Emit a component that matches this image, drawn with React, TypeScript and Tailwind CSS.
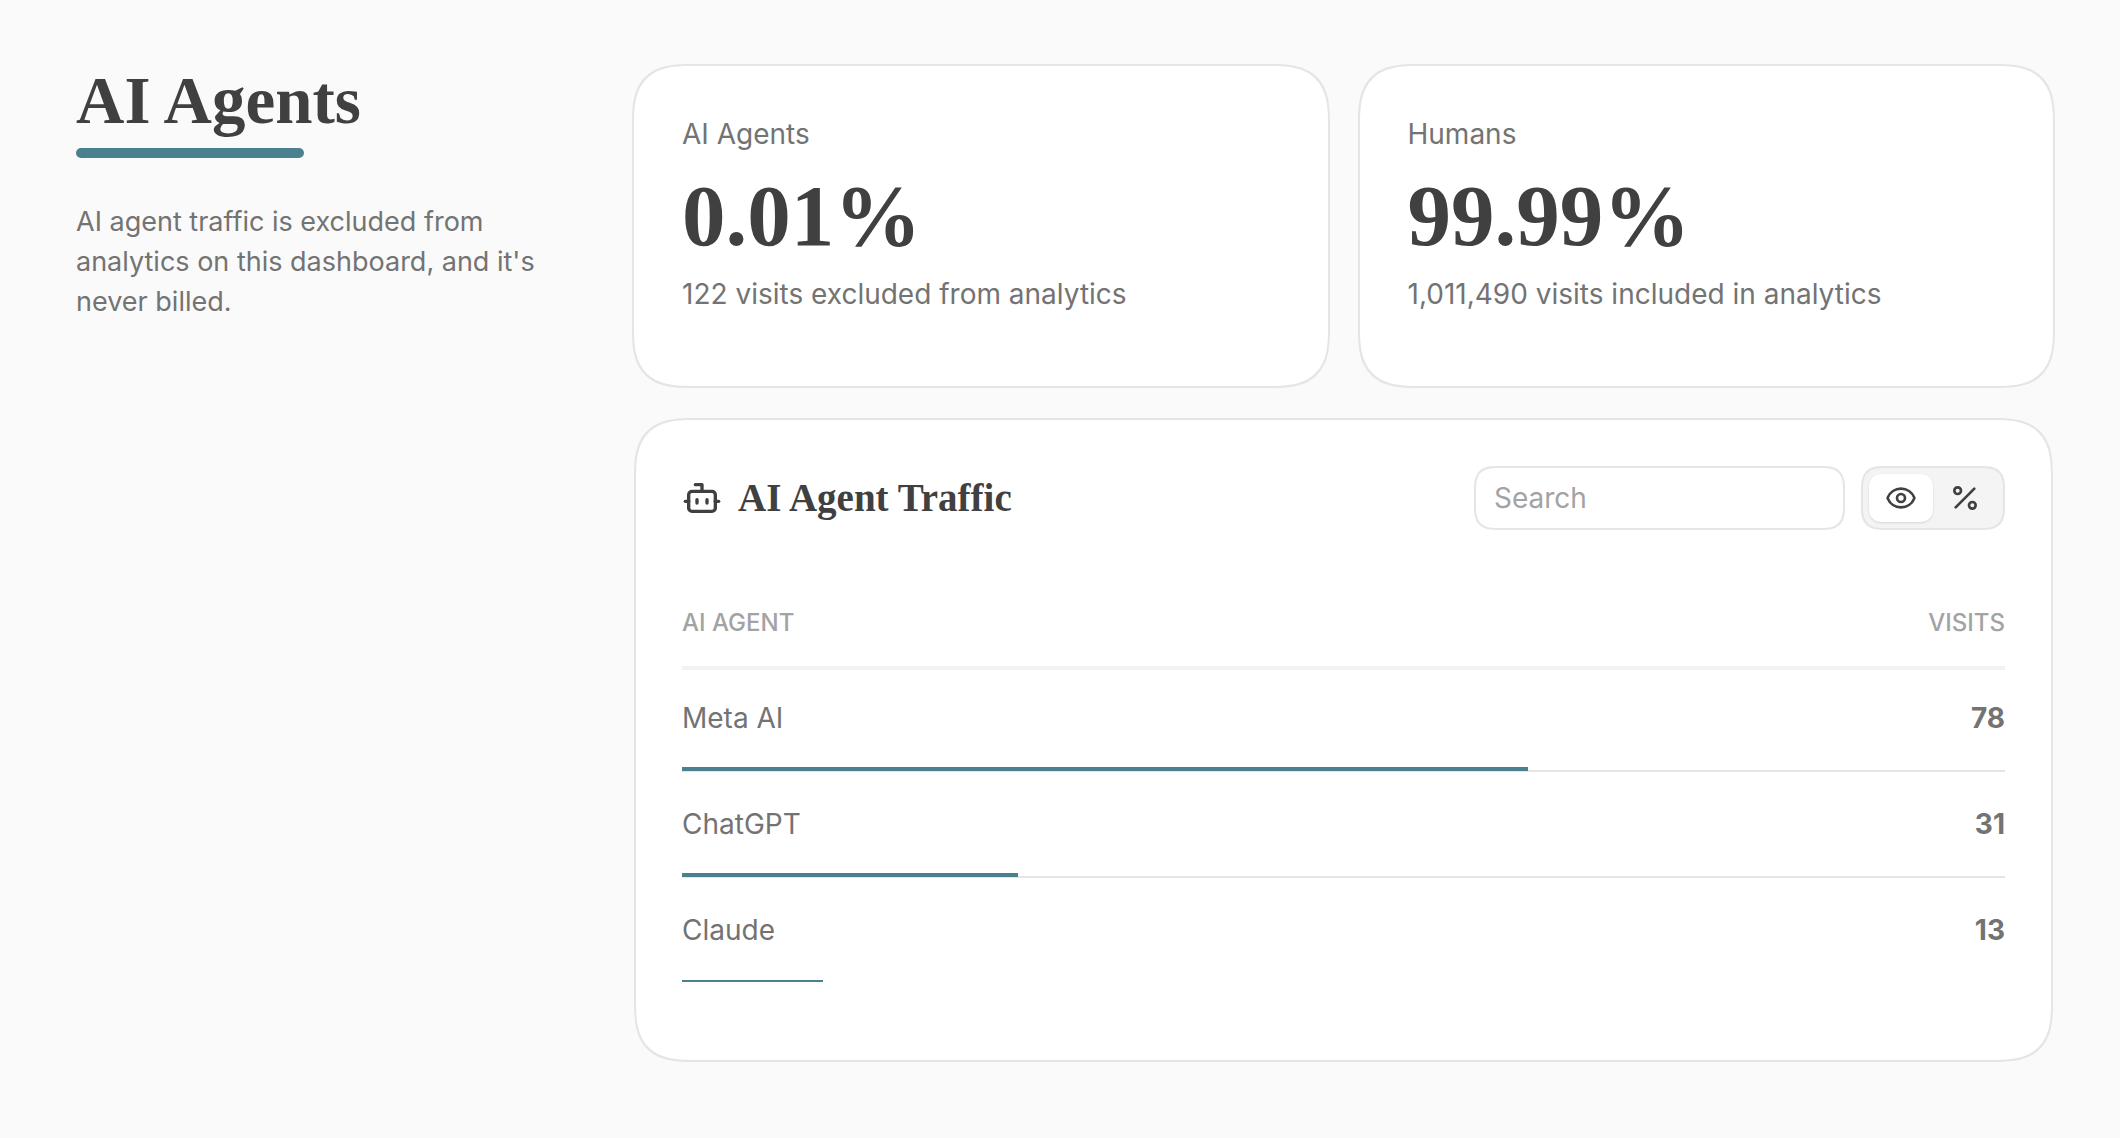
import { useState } from "react";
import { Bot, Eye, Percent } from "lucide-react";

const stats = [
  { label: "AI Agents", value: "0.01%", note: "122 visits excluded from analytics" },
  { label: "Humans", value: "99.99%", note: "1,011,490 visits included in analytics" },
];

const agents = [
  { name: "Meta AI", visits: 78 },
  { name: "ChatGPT", visits: 31 },
  { name: "Claude", visits: 13 },
];

const total = agents.reduce((sum, agent) => sum + agent.visits, 0);

function StatCard({ label, value, note }: { label: string; value: string; note: string }) {
  return (
    <section className="rounded-[60px] border-2 border-[#e5e5e5] bg-white px-12 pt-12 pb-[72px] [corner-shape:superellipse(1.5)]">
      <h2 className="leading-10">{label}</h2>
      <p className="mt-3.5 mb-2.5 font-['Liberation_Serif',serif] text-[87px] leading-[96px] font-bold text-[#404040]">{value}</p>
      <p className="leading-10">{note}</p>
    </section>
  );
}

function ModeButton({ active, label, onClick, children }: { active: boolean; label: string; onClick: () => void; children: React.ReactNode }) {
  return (
    <button
      type="button"
      aria-label={label}
      aria-pressed={active}
      onClick={onClick}
      className={
        active
          ? "flex h-12 w-16 items-center justify-center rounded-2xl bg-white text-[#404040] shadow-sm [corner-shape:superellipse(1.5)]"
          : "flex h-12 w-16 items-center justify-center rounded-2xl text-[#404040] [corner-shape:superellipse(1.5)]"
      }
    >
      {children}
    </button>
  );
}

export default function App() {
  const [mode, setMode] = useState<"visits" | "percent">("visits");
  const [query, setQuery] = useState("");
  const rows = agents.filter((agent) => agent.name.toLowerCase().includes(query.toLowerCase()));

  return (
    <div className="flex min-h-screen gap-[76px] bg-[#fafafa] pt-16 pr-[65px] pb-[76px] pl-[76px] font-['Inter',sans-serif] text-[28px] text-[#737373]">
      <header className="w-[480px] shrink-0">
        <div className="w-fit">
          <h1 className="font-['Liberation_Serif',serif] text-[67px] leading-[72px] font-bold text-[#404040]">AI Agents</h1>
          <div className="mt-3 h-2.5 w-4/5 rounded-full bg-[#4b808f]" />
        </div>
        <p className="mt-11 text-[27px] leading-10">AI agent traffic is excluded from analytics on this dashboard, and it's never billed.</p>
      </header>

      <main className="min-w-0 flex-1">
        <div className="grid grid-cols-2 gap-7">
          {stats.map((stat) => (
            <StatCard key={stat.label} {...stat} />
          ))}
        </div>

        <section className="mx-0.5 mt-[30px] rounded-[60px] border-2 border-[#e5e5e5] bg-white px-[46px] pt-[46px] pb-[76px] [corner-shape:superellipse(1.5)]">
          <div className="flex items-center">
            <Bot className="size-10 text-[#404040]" strokeWidth={2} />
            <h2 className="ml-4 flex-1 font-['Liberation_Serif',serif] text-[39px] leading-[48px] font-bold text-[#404040]">AI Agent Traffic</h2>
            <input
              type="text"
              aria-label="Search"
              placeholder="Search"
              value={query}
              onChange={(event) => setQuery(event.target.value)}
              className="h-16 w-[371px] rounded-3xl border-2 border-[#e5e5e5] bg-white px-[18px] outline-none placeholder:text-[#a3a3a3] [corner-shape:superellipse(1.5)]"
            />
            <div className="ml-4 flex rounded-3xl border-2 border-[#e5e5e5] bg-[#f4f4f4] p-1.5 [corner-shape:superellipse(1.5)]">
              <ModeButton active={mode === "visits"} label="Show visits" onClick={() => setMode("visits")}>
                <Eye className="size-8" />
              </ModeButton>
              <ModeButton active={mode === "percent"} label="Show percentages" onClick={() => setMode("percent")}>
                <Percent className="size-8" />
              </ModeButton>
            </div>
          </div>

          <table className="mt-[70px] w-full border-separate border-spacing-0">
            <thead className="text-2xl leading-9 text-[#a3a3a3]">
              <tr>
                <th className="pt-[5px] pb-[25px] text-left font-medium">AI AGENT</th>
                <th className="pt-[5px] pb-[25px] text-right font-medium">VISITS</th>
              </tr>
            </thead>
            <tbody>
              {rows.map((agent) => (
                <tr key={agent.name} className="group relative h-[106px] first:shadow-[inset_0_4px_0_#f2f2f2]">
                  <td className="border-b-2 border-[#e5e5e5] p-0 leading-10 group-last:border-transparent">
                    {agent.name}
                    <span
                      className="absolute bottom-px left-0 h-1 bg-[#4b808f] group-last:bottom-0.5 group-last:h-0.5"
                      style={{ width: `${(agent.visits / total) * 100}%` }}
                    />
                  </td>
                  <td className="border-b-2 border-[#e5e5e5] p-0 text-right leading-10 font-bold group-last:border-transparent">
                    {mode === "visits" ? agent.visits : `${Math.round((agent.visits / total) * 100)}%`}
                  </td>
                </tr>
              ))}
            </tbody>
          </table>
        </section>
      </main>
    </div>
  );
}
